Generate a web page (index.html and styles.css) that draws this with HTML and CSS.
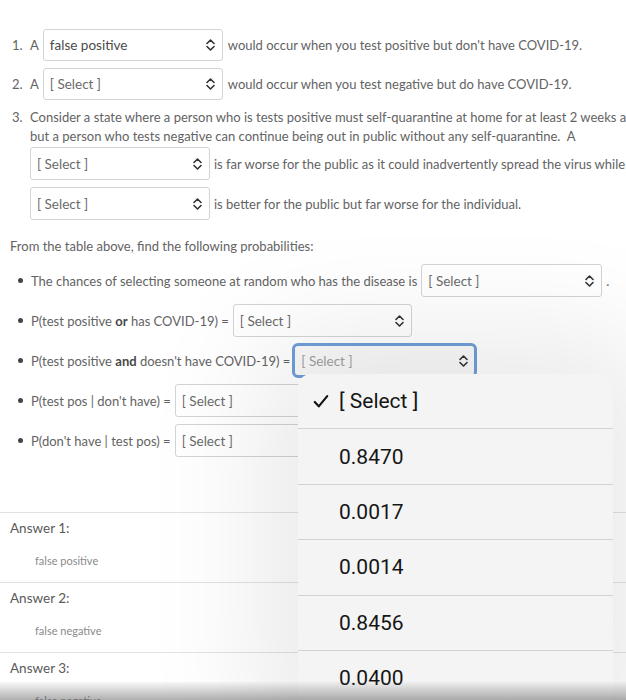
FILE: index.html
```html
<!DOCTYPE html>
<html>
<head>
<meta charset="utf-8">
<link rel="stylesheet" href="styles.css">
</head>
<body>
<div class="page">
  <div class="q q1">
    <span class="num">1.</span>
    <div class="line">
      <span class="a">A</span>
      <span class="sel w180"><span class="val dark">false positive</span><svg class="chev" viewBox="0 0 9 12"><path d="M1 4.5 L4.5 1 L8 4.5 M1 7.5 L4.5 11 L8 7.5"/></svg></span>
      <span class="after">would occur when you test positive but don't have COVID-19.</span>
    </div>
  </div>
  <div class="q q2">
    <span class="num">2.</span>
    <div class="line">
      <span class="a">A</span>
      <span class="sel w180"><span class="val">[ Select ]</span><svg class="chev" viewBox="0 0 9 12"><path d="M1 4.5 L4.5 1 L8 4.5 M1 7.5 L4.5 11 L8 7.5"/></svg></span>
      <span class="after">would occur when you test negative but do have COVID-19.</span>
    </div>
  </div>
  <div class="q q3">
    <span class="num">3.</span>
    <div class="body3">
      <p class="txt">Consider a state where a person who is tests positive must self-quarantine at home for at least 2 weeks and</p>
      <p class="txt">but a person who tests negative can continue being out in public without any self-quarantine.&nbsp; A</p>
      <div class="line l3a">
        <span class="sel w180"><span class="val">[ Select ]</span><svg class="chev" viewBox="0 0 9 12"><path d="M1 4.5 L4.5 1 L8 4.5 M1 7.5 L4.5 11 L8 7.5"/></svg></span>
        <span class="after">is far worse for the public as it could inadvertently spread the virus while</span>
      </div>
      <div class="line l3b">
        <span class="sel w180"><span class="val">[ Select ]</span><svg class="chev" viewBox="0 0 9 12"><path d="M1 4.5 L4.5 1 L8 4.5 M1 7.5 L4.5 11 L8 7.5"/></svg></span>
        <span class="after">is better for the public but far worse for the individual.</span>
      </div>
    </div>
  </div>

  <p class="intro">From the table above, find the following probabilities:</p>

  <ul class="bullets">
    <li class="b b1"><span class="dot"></span><span class="btxt">The chances of selecting someone at random who has the disease is</span><span class="sel w181"><span class="val">[ Select ]</span><svg class="chev" viewBox="0 0 9 12"><path d="M1 4.5 L4.5 1 L8 4.5 M1 7.5 L4.5 11 L8 7.5"/></svg></span><span class="period">.</span></li>
    <li class="b b2"><span class="dot"></span><span class="btxt">P(test positive <b>or</b> has COVID-19) =</span><span class="sel w179"><span class="val">[ Select ]</span><svg class="chev" viewBox="0 0 9 12"><path d="M1 4.5 L4.5 1 L8 4.5 M1 7.5 L4.5 11 L8 7.5"/></svg></span></li>
    <li class="b b3"><span class="dot"></span><span class="btxt">P(test positive <b>and</b> doesn't have COVID-19) =</span><span class="sel focus w185"><span class="val light">[ Select ]</span><svg class="chev" viewBox="0 0 9 12"><path d="M1 4.5 L4.5 1 L8 4.5 M1 7.5 L4.5 11 L8 7.5"/></svg></span></li>
    <li class="b b4"><span class="dot"></span><span class="btxt">P(test pos | don't have) =</span><span class="sel w180"><span class="val">[ Select ]</span></span></li>
    <li class="b b5"><span class="dot"></span><span class="btxt">P(don't have | test pos) =</span><span class="sel w180"><span class="val">[ Select ]</span></span></li>
  </ul>

  <div class="answers">
    <div class="ans">
      <div class="alabel">Answer 1:</div>
      <div class="aval">false positive</div>
    </div>
    <div class="ans">
      <div class="alabel">Answer 2:</div>
      <div class="aval">false negative</div>
    </div>
    <div class="ans">
      <div class="alabel">Answer 3:</div>
      <div class="aval">false negative</div>
    </div>
  </div>
</div>

<div class="menu">
  <div class="opt checked"><svg class="check" viewBox="0 0 18 16"><path d="M2 8.5 L6.5 13.5 L16 2"/></svg><span>[ Select ]</span></div>
  <div class="opt">0.8470</div>
  <div class="opt">0.0017</div>
  <div class="opt">0.0014</div>
  <div class="opt">0.8456</div>
  <div class="opt">0.0400</div>
</div>
<div class="bottomshade"></div>
</body>
</html>
```

FILE: styles.css
```css
html, body {
  margin: 0;
  padding: 0;
  background: #ffffff;
  overflow: hidden;
  width: 626px;
  height: 700px;
}
body {
  position: relative;
  font-family: Lato, "Open Sans", sans-serif;
  font-size: 13px;
  color: #636363;
}
.page {
  padding: 29px 0 0 0;
  width: 760px;
}
p { margin: 0; }

.q {
  display: flex;
  align-items: flex-start;
}
.num {
  width: 18px;
  padding-left: 12px;
  flex: none;
  line-height: 32px;
}
.q3 .num { line-height: 19px; }
.line {
  display: flex;
  align-items: center;
  height: 32px;
  white-space: nowrap;
}
.q2 { margin-top: 7px; }
.a { margin-right: 4px; }
.after { margin-left: 5px; }

.sel {
  box-sizing: border-box;
  height: 32px;
  border: 1px solid #d4d4d4;
  border-radius: 3px;
  background: #ffffff;
  display: flex;
  align-items: center;
  justify-content: space-between;
  padding: 0 7px 0 6px;
  flex: none;
  font-size: 13.5px;
}
.w180 { width: 180px; }
.w181 { width: 181px; }
.w179 { width: 179px; }
.w185 { width: 185px; }
.val { color: #6a6a6a; }
.val.dark { color: #4a4a4a; }
.val.light { color: #a0a0a0; }
.chev {
  width: 9px;
  height: 12px;
  fill: none;
  stroke: #333333;
  stroke-width: 1.6;
  stroke-linecap: round;
  stroke-linejoin: round;
}
.sel.focus {
  border: 3px solid #6f9fd8;
  border-radius: 6px;
  height: 35px;
  padding: 0 6px 0 6px;
  background: #fafafa;
}

.q3 { margin-top: 8px; }
.body3 { white-space: nowrap; }
.txt { line-height: 19px; }
.l3a { margin-top: 1px; height: 33px; }
.l3b { margin-top: 7px; height: 33px; }
.l3a .sel, .l3b .sel { height: 33px; }
.l3a .after, .l3b .after { margin-left: 4px; }

.intro {
  margin-top: 17px;
  padding-left: 10px;
  line-height: 19px;
}

.bullets {
  list-style: none;
  margin: 8px 0 0 0;
  padding: 0;
}
.b {
  display: flex;
  align-items: center;
  height: 33px;
  white-space: nowrap;
}
.b + .b { margin-top: 7px; }
.dot {
  width: 5px;
  height: 5px;
  border-radius: 50%;
  background: #444444;
  margin-left: 18px;
  margin-right: 8px;
  flex: none;
}
.btxt { margin-right: 4px; }
.btxt b { font-weight: 700; color: #484848; }
.b .sel { height: 33px; }
.b3 .sel { height: 35px; }
.b3 .btxt { margin-right: 2px; }
.period { margin-left: 4px; }

.answers {
  margin-top: 55px;
}
.ans {
  border-top: 1px solid #e2e2e2;
  height: 69px;
  padding-left: 10px;
}
.alabel {
  padding-top: 6px;
  line-height: 18px;
  font-size: 13.5px;
  color: #5a5a5a;
}
.aval {
  margin-top: 17px;
  padding-left: 25px;
  font-size: 11px;
  color: #8a8a8a;
  line-height: 14px;
}

.menu {
  position: absolute;
  left: 298px;
  top: 374px;
  width: 315px;
  height: 340px;
  background: #f4f4f4;
  border-radius: 13px;
  box-shadow: 0 0 120px 40px rgba(0, 0, 0, 0.085);
  font-family: Roboto, Inter, "Liberation Sans", sans-serif;
  font-size: 21px;
  color: #161616;
  overflow: hidden;
}
.opt {
  height: 55.4px;
  box-sizing: border-box;
  display: flex;
  align-items: center;
  padding-left: 41px;
  border-bottom: 1px solid #d2d2d2;
}
.opt.checked {
  padding-left: 15px;
}
.check {
  width: 16px;
  height: 15px;
  margin-right: 10px;
  fill: none;
  stroke: #111111;
  stroke-width: 2.4;
  stroke-linecap: round;
  stroke-linejoin: round;
}
.bottomshade {
  position: absolute;
  left: 0;
  right: 0;
  bottom: 0;
  height: 18px;
  background: linear-gradient(to bottom, rgba(120,120,120,0.05), rgba(80,80,80,0.45));
}
```
